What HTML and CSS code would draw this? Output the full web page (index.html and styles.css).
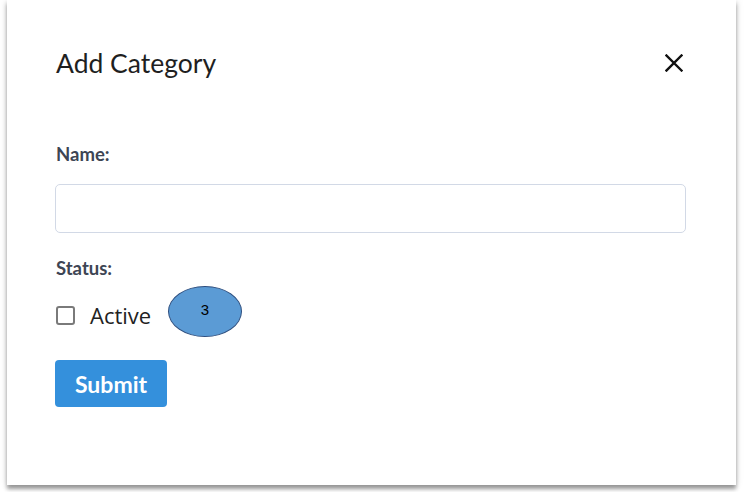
FILE: index.html
```html
<!DOCTYPE html>
<html lang="en">
<head>
<meta charset="utf-8">
<title>Add Category</title>
<link rel="stylesheet" href="styles.css">
</head>
<body>
<div class="modal">
  <div class="modal-header">
    <h2 class="title">Add Category</h2>
    <button class="close" aria-label="Close">
      <svg width="18" height="18" viewBox="0 0 18 18"><path d="M1.5 1.5 L16.5 16.5 M16.5 1.5 L1.5 16.5" stroke="#111" stroke-width="2.4" stroke-linecap="square" fill="none"/></svg>
    </button>
  </div>
  <form class="form">
    <label class="label label-name">Name:</label>
    <input class="input" type="text">
    <label class="label label-status">Status:</label>
    <div class="check-row">
      <span class="checkbox"></span>
      <span class="check-text">Active</span>
    </div>
    <button type="button" class="submit">Submit</button>
  </form>
  <div class="callout">3</div>
</div>
</body>
</html>
```

FILE: styles.css
```css
html, body {
  margin: 0;
  padding: 0;
  background: #ffffff;
}
body {
  width: 748px;
  height: 492px;
  overflow: hidden;
  font-family: Lato, "Open Sans", sans-serif;
}
.modal {
  position: relative;
  box-sizing: border-box;
  margin-left: 7px;
  width: 729px;
  height: 485px;
  background: #fff;
  padding: 47px 50px 0 48px;
  box-shadow: 0 4px 4px rgba(0,0,0,0.38), 0 0 8px rgba(0,0,0,0.12);
}
.modal-header {
  display: flex;
  align-items: center;
  justify-content: space-between;
  height: 32px;
}
.title {
  margin: 0 0 0 1px;
  font-size: 26.5px;
  font-weight: 400;
  line-height: 32px;
  color: #1f1f1f;
}
.close {
  border: 0;
  background: none;
  padding: 0;
  margin-right: 3px;
  width: 18px;
  height: 18px;
  display: flex;
}
.form {
  display: flex;
  flex-direction: column;
  align-items: flex-start;
}
.label {
  margin-left: 1px;
  font-size: 18.5px;
  font-weight: 700;
  line-height: 24px;
  color: #3d4554;
}
.label-name { margin-top: 63px; }
.input {
  margin-top: 18px;
  box-sizing: border-box;
  width: 631px;
  height: 49px;
  border: 1px solid #d2d9e6;
  border-radius: 5px;
  background: #fff;
}
.label-status { margin-top: 23px; }
.check-row {
  margin-top: 19px;
  display: flex;
  align-items: center;
  height: 32px;
}
.checkbox {
  box-sizing: border-box;
  width: 19px;
  height: 19px;
  border: 2px solid #7a7a7a;
  border-radius: 3px;
  margin-left: 1px;
  margin-right: 15px;
}
.check-text {
  font-family: "Open Sans", Lato, sans-serif;
  font-size: 22px;
  line-height: 32px;
  color: #222;
}
.submit {
  margin-top: 29px;
  width: 112px;
  height: 47px;
  border: 0;
  border-radius: 4px;
  background: #3490dc;
  color: #fff;
  font-family: Lato, sans-serif;
  font-weight: 700;
  font-size: 23px;
  padding: 0;
}
.callout {
  position: absolute;
  left: 161px;
  top: 286px;
  box-sizing: border-box;
  width: 74px;
  height: 51px;
  border-radius: 50%;
  background: #5b9bd5;
  border: 1.5px solid #2f4f7f;
  font-family: "Liberation Sans", sans-serif;
  font-size: 15px;
  color: #000;
  text-align: center;
  padding-top: 15px;
  line-height: 16px;
}
```
